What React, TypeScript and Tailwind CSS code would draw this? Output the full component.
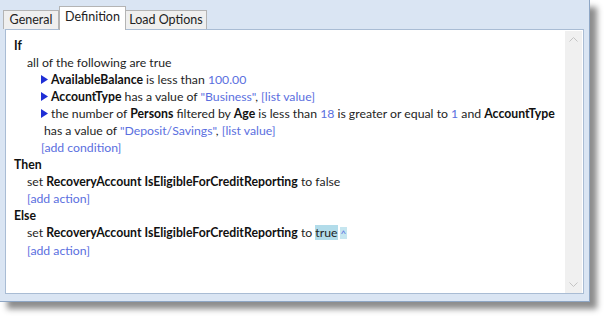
import React from "react";

const Tri = () => (
  <svg width="7" height="9" viewBox="0 0 7 9" className="mr-[3px] inline-block shrink-0">
    <polygon points="0,0 7,4.5 0,9" fill="#1f2fd6" />
  </svg>
);

const B = ({ children }: { children: React.ReactNode }) => (
  <span className="font-bold text-[#111]">{children}</span>
);
const L = ({ children }: { children: React.ReactNode }) => (
  <span className="text-[#5b6fe0]">{children}</span>
);

export default function App() {
  return (
    <div className="w-[606px] h-[317px] bg-white relative" style={{ fontFamily: 'Lato, "Noto Sans", sans-serif' }}>
      <div className="w-[590px] h-[302px] bg-[#dae5f3] border-r border-b border-[#8ea6c4] shadow-[7px_7px_6px_rgba(0,0,0,0.45)] flex flex-col">
        {/* tabs */}
        <div className="flex items-end pl-[3px] pt-[5px] h-[29px] text-[12.5px] text-[#222]">
          <div className="h-[19px] w-[56px] justify-center flex items-center bg-[#efefef] border border-[#b4b4b4] border-b-0">General</div>
          <div className="h-[24px] w-[67px] justify-center flex items-center bg-white border border-[#b4b4b4] border-b-0 -mb-px relative z-10 pb-[3px]">Definition</div>
          <div className="h-[19px] w-[81px] justify-center flex items-center bg-[#efefef] border border-[#b4b4b4] border-b-0 border-l-0">Load Options</div>
        </div>
        <div className="mx-[5px] h-[265px] bg-white border border-[#a9bcd4] flex">
          <div className="flex-1 pl-[8px] pt-[7px] text-[12.25px] leading-[17px] text-[#1e1e1e] whitespace-nowrap">
            <div className="font-bold text-[#111]">If</div>
            <div className="pl-[13px]">all of the following are true</div>
            <div className="pl-[27px] flex items-center"><Tri /><span><B>AvailableBalance</B> is less than <L>100.00</L></span></div>
            <div className="pl-[27px] flex items-center"><Tri /><span><B>AccountType</B> has a value of <L>"Business"</L>, <L>[list value]</L></span></div>
            <div className="pl-[27px] flex items-center"><Tri /><span>the number of <B>Persons</B> filtered by <B>Age</B> is less than <L>18</L> is greater or equal to <L>1</L> and <B>AccountType</B></span></div>
            <div className="pl-[30px]">has a value of <L>"Deposit/Savings"</L>, <L>[list value]</L></div>
            <div className="pl-[27px]"><L>[add condition]</L></div>
            <div className="font-bold text-[#111]">Then</div>
            <div className="pl-[13px]">set <B>RecoveryAccount IsEligibleForCreditReporting</B> to false</div>
            <div className="pl-[13px]"><L>[add action]</L></div>
            <div className="font-bold text-[#111]">Else</div>
            <div className="pl-[13px]">set <B>RecoveryAccount IsEligibleForCreditReporting</B> to <span className="bg-[#b2dcea]">true</span><span className="bg-[#c6e6f0] text-[#5b6fe0] ml-[2px] px-[1px] text-[10px]">^</span></div>
            <div className="pl-[13px]"><L>[add action]</L></div>
          </div>
          <div className="w-[17px] mt-px mr-px bg-[#f0f0f0] flex flex-col justify-between items-center py-[6px]">
            <svg width="9" height="5" viewBox="0 0 9 5"><polyline points="0.5,4.5 4.5,0.5 8.5,4.5" fill="none" stroke="#c4c4c4" strokeWidth="1" /></svg>
            <svg width="9" height="5" viewBox="0 0 9 5"><polyline points="0.5,0.5 4.5,4.5 8.5,0.5" fill="none" stroke="#c4c4c4" strokeWidth="1" /></svg>
          </div>
        </div>
      </div>
    </div>
  );
}
